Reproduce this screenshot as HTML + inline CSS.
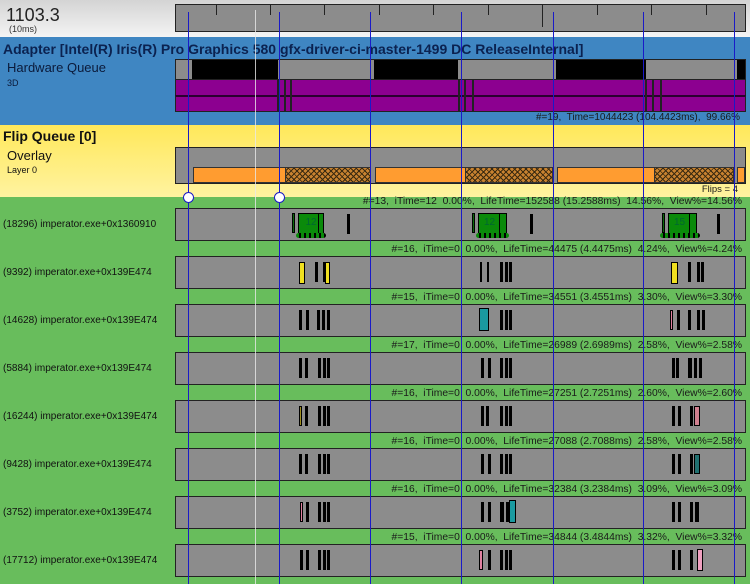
<!DOCTYPE html>
<html><head><meta charset="utf-8"><style>
*{margin:0;padding:0;box-sizing:border-box}
body{width:750px;height:584px;overflow:hidden;position:relative;font-family:"Liberation Sans",Arial,sans-serif;background:#68bd5c}
div{position:absolute}
.box{background:#8c8c8c;border:1px solid #222}
.t{white-space:nowrap;color:#111}
.st{font-size:10.3px;color:#1a1a1a;right:8px;text-align:right;white-space:nowrap}
.lb{font-size:10px;left:3px;white-space:nowrap;color:#111}
.b{background:#000;width:3px;height:20px}
.vl{width:1px;top:12px;height:572px;background:#1a1ac8}
.tk{width:1px;background:#222;top:5px;height:10px}
.hatch{background-color:#c88230;background-image:repeating-linear-gradient(45deg,transparent 0 3px,#3a2a10 3px 4px),repeating-linear-gradient(-45deg,transparent 0 3px,#3a2a10 3px 4px);border:1px solid #333}
.or{background:#ff9c30;border:1px solid #333}
</style></head><body>
<div style="left:0;top:0;width:750px;height:37px;background:linear-gradient(#d4d4d4,#f4f4f4)"></div>
<div class="t" style="left:6px;top:5px;font-size:18px;color:#222">1103.3</div>
<div class="t" style="left:9px;top:24px;font-size:9px;color:#333">(10ms)</div>
<div class="box" style="left:175px;top:4px;width:571px;height:28px"></div>
<div class="tk" style="left:216px"></div><div class="tk" style="left:270px"></div><div class="tk" style="left:324px"></div><div class="tk" style="left:379px"></div><div class="tk" style="left:433px"></div><div class="tk" style="left:542px;height:22px"></div><div class="tk" style="left:597px"></div><div class="tk" style="left:651px"></div><div class="tk" style="left:706px"></div>
<div class="tk" style="left:488px"></div>
<div style="left:0;top:37px;width:750px;height:88px;background:#3f86c2"></div>
<div class="t" style="left:3px;top:41px;font-size:14px;font-weight:700;color:#0b2250">Adapter [Intel(R) Iris(R) Pro Graphics 580 gfx-driver-ci-master-1499 DC ReleaseInternal]</div>
<div class="t" style="left:7px;top:60px;font-size:13px;color:#0b1a3a">Hardware Queue</div>
<div class="t" style="left:7px;top:78px;font-size:9px;color:#0b1a3a">3D</div>
<div class="box" style="left:175px;top:59px;width:571px;height:53px;background:#8c8c8c"></div>
<div style="left:192px;top:60px;width:86px;height:19px;background:#000"></div>
<div style="left:374px;top:60px;width:84px;height:19px;background:#000"></div>
<div style="left:556px;top:60px;width:90px;height:19px;background:#000"></div>
<div style="left:737px;top:60px;width:8px;height:19px;background:#000"></div>
<div style="left:175px;top:79px;width:571px;height:17px;background:#8c0090;border:1px solid #222"></div>
<div style="left:175px;top:95px;width:571px;height:17px;background:#8c0090;border:1px solid #222;border-top:2px solid #2a0030"></div>
<div style="left:277px;top:79px;width:2px;height:33px;background:#222"></div><div style="left:284px;top:79px;width:2px;height:33px;background:#222"></div><div style="left:290px;top:79px;width:2px;height:33px;background:#222"></div>
<div style="left:458px;top:79px;width:2px;height:33px;background:#222"></div><div style="left:464px;top:79px;width:2px;height:33px;background:#222"></div><div style="left:472px;top:79px;width:2px;height:33px;background:#222"></div>
<div style="left:645px;top:79px;width:2px;height:33px;background:#222"></div><div style="left:652px;top:79px;width:2px;height:33px;background:#222"></div><div style="left:660px;top:79px;width:2px;height:33px;background:#222"></div>
<div class="st" style="top:112px;font-size:10px;right:10px">#=19,&nbsp; Time=1044423 (104.4423ms),&nbsp; 99.66%</div>
<div style="left:0;top:125px;width:750px;height:72px;background:linear-gradient(#ffe85a,#fff3a0)"></div>
<div class="t" style="left:3px;top:128px;font-size:14px;font-weight:bold">Flip Queue [0]</div>
<div class="t" style="left:7px;top:148px;font-size:13px">Overlay</div>
<div class="t" style="left:7px;top:165px;font-size:9px">Layer 0</div>
<div class="box" style="left:175px;top:147px;width:571px;height:37px"></div>
<div class="or" style="left:193px;top:167px;width:93px;height:16px"></div>
<div class="hatch" style="left:285px;top:167px;width:86px;height:16px"></div>
<div class="or" style="left:375px;top:167px;width:91px;height:16px"></div>
<div class="hatch" style="left:465px;top:167px;width:88px;height:16px"></div>
<div class="or" style="left:557px;top:167px;width:98px;height:16px"></div>
<div class="hatch" style="left:654px;top:167px;width:80px;height:16px"></div>
<div class="or" style="left:737px;top:167px;width:8px;height:16px"></div>
<div class="st" style="top:184px;font-size:9.5px;right:12px">Flips = 4</div>

<div class="st" style="top:196px">#=13,&nbsp; iTime=12&nbsp; 0.00%,&nbsp; LifeTime=152588 (15.2588ms)&nbsp; 14.56%,&nbsp; View%=14.56%</div>
<div class="lb" style="top:219px">(18296) imperator.exe+0x1360910</div>
<div class="box" style="left:175px;top:208px;width:571px;height:33px"></div>
<div class="st" style="top:244px">#=16,&nbsp; iTime=0&nbsp; 0.00%,&nbsp; LifeTime=44475 (4.4475ms)&nbsp; 4.24%,&nbsp; View%=4.24%</div>
<div class="lb" style="top:267px">(9392) imperator.exe+0x139E474</div>
<div class="box" style="left:175px;top:256px;width:571px;height:33px"></div>
<div class="st" style="top:292px">#=15,&nbsp; iTime=0&nbsp; 0.00%,&nbsp; LifeTime=34551 (3.4551ms)&nbsp; 3.30%,&nbsp; View%=3.30%</div>
<div class="lb" style="top:315px">(14628) imperator.exe+0x139E474</div>
<div class="box" style="left:175px;top:304px;width:571px;height:33px"></div>
<div class="st" style="top:340px">#=17,&nbsp; iTime=0&nbsp; 0.00%,&nbsp; LifeTime=26989 (2.6989ms)&nbsp; 2.58%,&nbsp; View%=2.58%</div>
<div class="lb" style="top:363px">(5884) imperator.exe+0x139E474</div>
<div class="box" style="left:175px;top:352px;width:571px;height:33px"></div>
<div class="st" style="top:388px">#=16,&nbsp; iTime=0&nbsp; 0.00%,&nbsp; LifeTime=27251 (2.7251ms)&nbsp; 2.60%,&nbsp; View%=2.60%</div>
<div class="lb" style="top:411px">(16244) imperator.exe+0x139E474</div>
<div class="box" style="left:175px;top:400px;width:571px;height:33px"></div>
<div class="st" style="top:436px">#=16,&nbsp; iTime=0&nbsp; 0.00%,&nbsp; LifeTime=27088 (2.7088ms)&nbsp; 2.58%,&nbsp; View%=2.58%</div>
<div class="lb" style="top:459px">(9428) imperator.exe+0x139E474</div>
<div class="box" style="left:175px;top:448px;width:571px;height:33px"></div>
<div class="st" style="top:484px">#=16,&nbsp; iTime=0&nbsp; 0.00%,&nbsp; LifeTime=32384 (3.2384ms)&nbsp; 3.09%,&nbsp; View%=3.09%</div>
<div class="lb" style="top:507px">(3752) imperator.exe+0x139E474</div>
<div class="box" style="left:175px;top:496px;width:571px;height:33px"></div>
<div class="st" style="top:532px">#=15,&nbsp; iTime=0&nbsp; 0.00%,&nbsp; LifeTime=34844 (3.4844ms)&nbsp; 3.32%,&nbsp; View%=3.32%</div>
<div class="lb" style="top:555px">(17712) imperator.exe+0x139E474</div>
<div class="box" style="left:175px;top:544px;width:571px;height:33px"></div>

<div style="left:292px;top:213px;width:3px;height:20px;background:#0a6a0a;border:1px solid #000"></div>
<div style="left:298px;top:213px;width:26px;height:21px;background:#0a8a0a;border:1px solid #000;font-size:10px;color:#063;text-align:center;line-height:18px">12</div>
<div style="left:318px;top:213px;width:1px;height:21px;background:#000"></div>
<div style="left:296px;top:233px;width:30px;height:5px;border-radius:3px;background:repeating-linear-gradient(90deg,#0a8a0a 0 3px,#000 3px 5px)"></div>
<div class="b" style="left:347px;top:214px"></div>
<div style="left:472px;top:213px;width:3px;height:20px;background:#0a6a0a;border:1px solid #000"></div>
<div style="left:478px;top:213px;width:29px;height:21px;background:#0a8a0a;border:1px solid #000;font-size:10px;color:#063;text-align:left;padding-left:5px;line-height:18px">12</div>
<div style="left:499px;top:213px;width:1px;height:21px;background:#000"></div>
<div style="left:476px;top:233px;width:33px;height:5px;border-radius:3px;background:repeating-linear-gradient(90deg,#0a8a0a 0 3px,#000 3px 5px)"></div>
<div class="b" style="left:530px;top:214px"></div>
<div style="left:662px;top:213px;width:3px;height:20px;background:#0a6a0a;border:1px solid #000"></div>
<div style="left:668px;top:213px;width:29px;height:21px;background:#0a8a0a;border:1px solid #000;font-size:10px;color:#063;text-align:left;padding-left:5px;line-height:18px">15</div>
<div style="left:689px;top:213px;width:1px;height:21px;background:#000"></div>
<div style="left:660px;top:233px;width:40px;height:5px;border-radius:3px;background:repeating-linear-gradient(90deg,#0a8a0a 0 3px,#000 3px 5px)"></div>
<div class="b" style="left:717px;top:214px"></div>

<div style="left:299px;top:262px;width:6px;height:22px;background:#f0e020;border:1px solid #000"></div>
<div class="b" style="left:315px;top:262px"></div><div class="b" style="left:323px;top:262px;width:2px"></div>
<div style="left:325px;top:262px;width:5px;height:22px;background:#f0e020;border:1px solid #000"></div>
<div class="b" style="left:480px;top:262px;width:2px"></div><div class="b" style="left:487px;top:262px;width:2px"></div><div class="b" style="left:500px;top:262px"></div><div class="b" style="left:505px;top:262px"></div><div class="b" style="left:509px;top:262px"></div>
<div style="left:671px;top:262px;width:7px;height:22px;background:#f0e020;border:1px solid #000"></div>
<div class="b" style="left:688px;top:262px"></div><div class="b" style="left:697px;top:262px"></div><div class="b" style="left:701px;top:262px"></div>

<div class="b" style="left:299px;top:310px"></div><div class="b" style="left:306px;top:310px"></div><div class="b" style="left:317px;top:310px"></div><div class="b" style="left:322px;top:310px"></div><div class="b" style="left:327px;top:310px"></div>
<div style="left:479px;top:308px;width:10px;height:23px;background:#1a9aa0;border:1px solid #000"></div>
<div class="b" style="left:500px;top:310px"></div><div class="b" style="left:505px;top:310px"></div><div class="b" style="left:509px;top:310px"></div>
<div style="left:670px;top:310px;width:3px;height:20px;background:#e080a0;border:1px solid #000"></div>
<div class="b" style="left:677px;top:310px"></div><div class="b" style="left:688px;top:310px"></div><div class="b" style="left:697px;top:310px"></div><div class="b" style="left:702px;top:310px"></div>

<div class="b" style="left:299px;top:358px"></div><div class="b" style="left:305px;top:358px"></div><div class="b" style="left:318px;top:358px"></div><div class="b" style="left:323px;top:358px"></div><div class="b" style="left:327px;top:358px"></div>
<div class="b" style="left:481px;top:358px"></div><div class="b" style="left:488px;top:358px"></div><div class="b" style="left:500px;top:358px"></div><div class="b" style="left:505px;top:358px"></div><div class="b" style="left:509px;top:358px"></div>
<div class="b" style="left:672px;top:358px"></div><div class="b" style="left:676px;top:358px"></div><div class="b" style="left:688px;top:358px;width:4px"></div><div class="b" style="left:694px;top:358px"></div><div class="b" style="left:699px;top:358px"></div>

<div style="left:299px;top:406px;width:3px;height:20px;background:#a09020;border:1px solid #000"></div>
<div class="b" style="left:305px;top:406px"></div><div class="b" style="left:318px;top:406px"></div><div class="b" style="left:323px;top:406px"></div><div class="b" style="left:327px;top:406px"></div>
<div class="b" style="left:481px;top:406px"></div><div class="b" style="left:486px;top:406px"></div><div class="b" style="left:500px;top:406px"></div><div class="b" style="left:505px;top:406px"></div><div class="b" style="left:509px;top:406px"></div>
<div class="b" style="left:672px;top:406px"></div><div class="b" style="left:678px;top:406px"></div><div class="b" style="left:690px;top:406px"></div>
<div style="left:694px;top:406px;width:6px;height:20px;background:#d08090;border:1px solid #000"></div>

<div class="b" style="left:299px;top:454px"></div><div class="b" style="left:305px;top:454px"></div><div class="b" style="left:318px;top:454px"></div><div class="b" style="left:323px;top:454px"></div><div class="b" style="left:327px;top:454px"></div>
<div class="b" style="left:481px;top:454px"></div><div class="b" style="left:488px;top:454px"></div><div class="b" style="left:500px;top:454px"></div><div class="b" style="left:505px;top:454px"></div><div class="b" style="left:509px;top:454px"></div>
<div class="b" style="left:672px;top:454px"></div><div class="b" style="left:678px;top:454px"></div><div class="b" style="left:690px;top:454px"></div>
<div style="left:694px;top:454px;width:6px;height:20px;background:#207070;border:1px solid #000"></div>

<div style="left:300px;top:502px;width:3px;height:20px;background:#e080a0;border:1px solid #000"></div>
<div class="b" style="left:306px;top:502px"></div><div class="b" style="left:318px;top:502px"></div><div class="b" style="left:323px;top:502px"></div><div class="b" style="left:327px;top:502px"></div>
<div class="b" style="left:481px;top:502px"></div><div class="b" style="left:488px;top:502px"></div><div class="b" style="left:500px;top:502px;width:4px"></div><div class="b" style="left:506px;top:502px"></div>
<div style="left:509px;top:500px;width:7px;height:23px;background:#1a9aa0;border:1px solid #000"></div>
<div class="b" style="left:672px;top:502px"></div><div class="b" style="left:678px;top:502px"></div><div class="b" style="left:690px;top:502px"></div><div class="b" style="left:695px;top:502px;width:4px"></div>

<div class="b" style="left:300px;top:550px"></div><div class="b" style="left:306px;top:550px"></div><div class="b" style="left:318px;top:550px"></div><div class="b" style="left:323px;top:550px"></div><div class="b" style="left:327px;top:550px"></div>
<div style="left:479px;top:550px;width:4px;height:20px;background:#e080a0;border:1px solid #000"></div>
<div class="b" style="left:488px;top:550px"></div><div class="b" style="left:500px;top:550px"></div><div class="b" style="left:505px;top:550px"></div><div class="b" style="left:509px;top:550px"></div>
<div class="b" style="left:672px;top:550px"></div><div class="b" style="left:678px;top:550px"></div><div class="b" style="left:690px;top:550px"></div>
<div style="left:697px;top:549px;width:6px;height:22px;background:#f0a0c0;border:1px solid #000"></div>

<div style="left:255px;top:10px;width:1px;height:574px;background:#e8e8e8;opacity:.8"></div>
<div class="vl" style="left:188px"></div><div class="vl" style="left:279px"></div><div class="vl" style="left:370px"></div><div class="vl" style="left:461px"></div><div class="vl" style="left:553px"></div><div class="vl" style="left:643px"></div><div class="vl" style="left:734px"></div>
<div style="left:183px;top:192px;width:11px;height:11px;border-radius:50%;background:#fff;border:1px solid #1a1ac8"></div>
<div style="left:274px;top:192px;width:11px;height:11px;border-radius:50%;background:#fff;border:1px solid #1a1ac8"></div>
</body></html>
